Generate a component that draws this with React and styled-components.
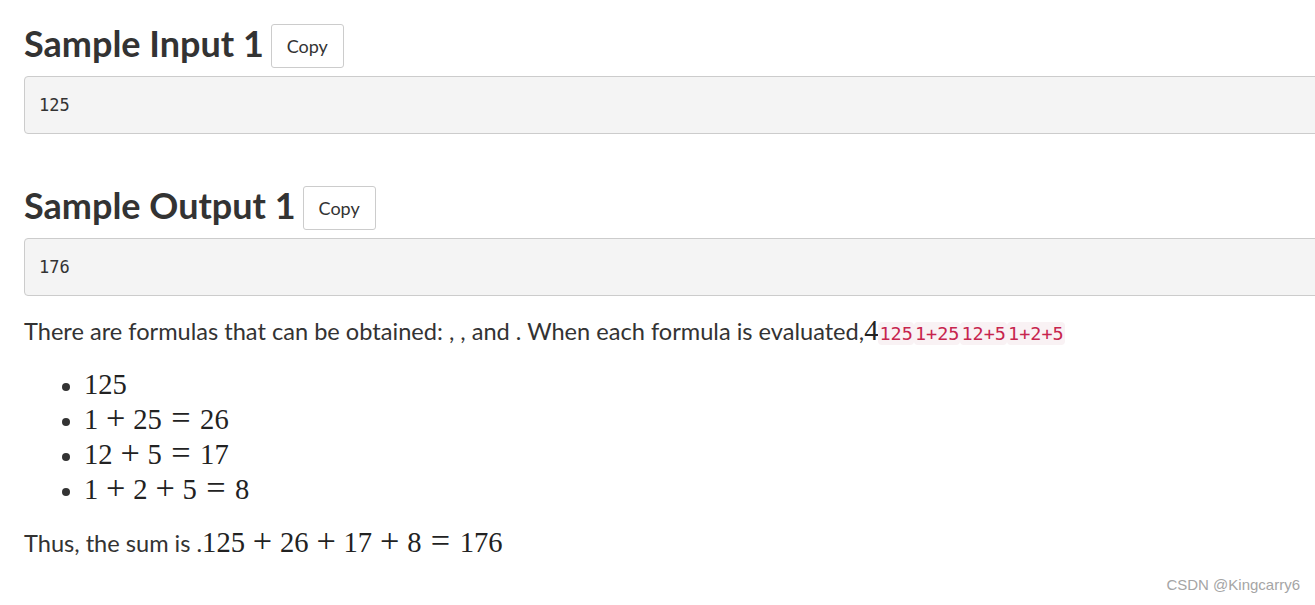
import React from 'react'
import styled, { createGlobalStyle } from 'styled-components'

const GlobalStyle = createGlobalStyle`
  html, body {
    margin: 0;
    padding: 0;
    background: #fff;
    overflow: hidden;
  }
  body {
    font-family: Lato, 'Open Sans', sans-serif;
    color: #333;
  }
`

const samples = [
  { title: 'Sample Input 1', value: '125' },
  { title: 'Sample Output 1', value: '176' },
]

const formulas = [
  { code: '125', parts: ['125'] },
  { code: '1+25', parts: ['1', '+', '25', '=', '26'] },
  { code: '12+5', parts: ['12', '+', '5', '=', '17'] },
  { code: '1+2+5', parts: ['1', '+', '2', '+', '5', '=', '8'] },
]

const Page = styled.div`
  position: relative;
  width: 1315px;
  height: 605px;
  padding: 24px 0 0 24px;
  box-sizing: border-box;
  overflow: hidden;
`

const Section = styled.section`
  margin-bottom: ${p => (p.last ? '0' : '52px')};
`

const HeadRow = styled.div`
  display: flex;
  align-items: center;
  gap: 7px;
  height: 44px;
`

const Title = styled.h3`
  margin: 0;
  font-family: Lato, sans-serif;
  font-weight: 700;
  font-size: 36px;
  line-height: 44px;
  color: #333;
  position: relative;
  top: -3px;
`

const CopyButton = styled.button`
  height: 44px;
  width: 73px;
  padding: 0;
  background: #fff;
  border: 1px solid #ccc;
  border-radius: 3px;
  font-family: Lato, sans-serif;
  font-size: 18px;
  color: #333;
  cursor: pointer;
`

const Pre = styled.pre`
  margin: 8px 0 0;
  width: 1320px;
  height: 58px;
  box-sizing: border-box;
  padding: 0 14px;
  display: flex;
  align-items: center;
  background: #f4f4f4;
  border: 1px solid #ccc;
  border-radius: 4px;
  font-family: 'DejaVu Sans Mono', monospace;
  font-size: 17px;
  color: #333;
`

const Text = styled.p`
  margin: ${p => p.margin || '0'};
  height: 33px;
  font-family: Lato, sans-serif;
  font-size: 23.6px;
  line-height: 33px;
  color: #333;
`

const MathSpan = styled.span`
  font-family: 'Liberation Serif', 'DejaVu Serif', serif;
  font-size: 28.6px;
  color: #222;
`

const Op = styled.span`
  display: inline-block;
  font-size: 1.2em;
  line-height: 0;
  width: 0.65em;
  text-align: center;
  margin: 0 ${p => (p.rel ? '0.232em' : '0.185em')};
`

const Code = styled.code`
  font-family: 'DejaVu Sans Mono', monospace;
  font-size: 18.5px;
  color: #c7254e;
  background: #f9f2f4;
  padding: 1px 1px;
  border-radius: 4px;
`

const List = styled.ul`
  margin: 20px 0 19px;
  padding-left: 60px;
  font-size: 23.6px;
`

const Item = styled.li`
  height: 35px;
  line-height: 35px;
  color: #333;
`

const Watermark = styled.div`
  position: absolute;
  right: 15px;
  bottom: 12px;
  font-family: 'Liberation Sans', Arial, sans-serif;
  font-size: 15px;
  color: #a5a5a5;
`

const Formula = ({ parts }) => (
  <MathSpan>
    {parts.map((p, i) =>
      p === '+' || p === '=' ? (
        <Op key={i} rel={p === '='}>
          {p}
        </Op>
      ) : (
        <span key={i}>{p}</span>
      )
    )}
  </MathSpan>
)

export default function App() {
  return (
    <>
      <GlobalStyle />
      <Page>
        {samples.map((s, i) => (
          <Section key={s.title} last={i === samples.length - 1}>
            <HeadRow>
              <Title>{s.title}</Title>
              <CopyButton>Copy</CopyButton>
            </HeadRow>
            <Pre>{s.value}</Pre>
          </Section>
        ))}
        <Text margin="18px 0 0">
          There are formulas that can be obtained: , , and . When each formula is evaluated,
          <MathSpan>4</MathSpan>
          {formulas.map(f => (
            <Code key={f.code}>{f.code}</Code>
          ))}
        </Text>
        <List>
          {formulas.map(f => (
            <Item key={f.code}>
              <Formula parts={f.parts} />
            </Item>
          ))}
        </List>
        <Text>
          Thus, the sum is .
          <Formula parts={['125', '+', '26', '+', '17', '+', '8', '=', '176']} />
        </Text>
        <Watermark>CSDN @Kingcarry6</Watermark>
      </Page>
    </>
  )
}
